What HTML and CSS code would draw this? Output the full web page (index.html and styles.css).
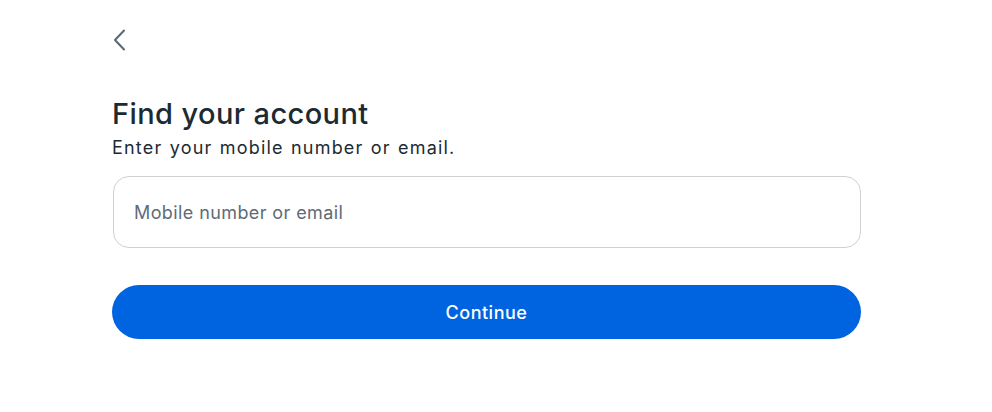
FILE: index.html
```html
<!DOCTYPE html>
<html lang="en">

<head>
    <meta charset="UTF-8">
    <meta name="viewport" content="width=device-width, initial-scale=1.0">
    <title>Find your account</title>
    <link rel="stylesheet" href="styles.css">
</head>

<body>

    <div class="container">
        <button class="back" aria-label="Back">
            <svg width="16" height="24" viewBox="0 0 16 24">
                <path d="M11 2.5 L2 12 L11 21.5" fill="none" stroke="#5a6777" stroke-width="2" stroke-linecap="round" stroke-linejoin="round"/>
            </svg>
        </button>

        <div class="title">
            <h1>Find your account</h1>
            <p>Enter your mobile number or email.</p>
        </div>

        <div class="field">
            <input type="text" id="contact" placeholder="Mobile number or email">
        </div>

        <button class="primary">Continue</button>
    </div>

</body>

</html>
```

FILE: styles.css
```css
body {
    font-family: Inter, "Noto Sans", sans-serif;
    background-color: #ffffff;
    color: #1c2b33;
    margin: 0;
    padding: 0;
}

.container {
    width: 749px;
    margin-left: 112px;
    padding-top: 28px;
}

.back {
    display: block;
    background: none;
    border: none;
    padding: 0;
    margin: 0 0 0 1px;
    height: 24px;
    cursor: pointer;
}

.title {
    margin-top: 44px;
}

h1 {
    font-size: 29px;
    font-weight: 500;
    letter-spacing: 0.4px;
    margin: 0;
    line-height: 36px;
    color: #1c2b33;
}

.title p {
    font-size: 18px;
    letter-spacing: 1.2px;
    word-spacing: 1px;
    margin: 4px 0 0;
    line-height: 24px;
    color: #1c2b33;
}

.field {
    margin-top: 16px;
}

.field input {
    box-sizing: border-box;
    width: 748px;
    height: 72px;
    margin-left: 1px;
    padding: 0 20px;
    font-family: inherit;
    font-size: 18px;
    letter-spacing: 0.4px;
    border: 1px solid #ced0d4;
    border-radius: 16px;
    outline: none;
}

.field input::placeholder {
    color: #5d6c7b;
}

.primary {
    display: block;
    width: 749px;
    height: 54px;
    margin-top: 37px;
    background-color: #0064e0;
    color: #ffffff;
    font-family: inherit;
    font-size: 18px;
    font-weight: 500;
    letter-spacing: 0.5px;
    border: none;
    border-radius: 27px;
    cursor: pointer;
}
```
